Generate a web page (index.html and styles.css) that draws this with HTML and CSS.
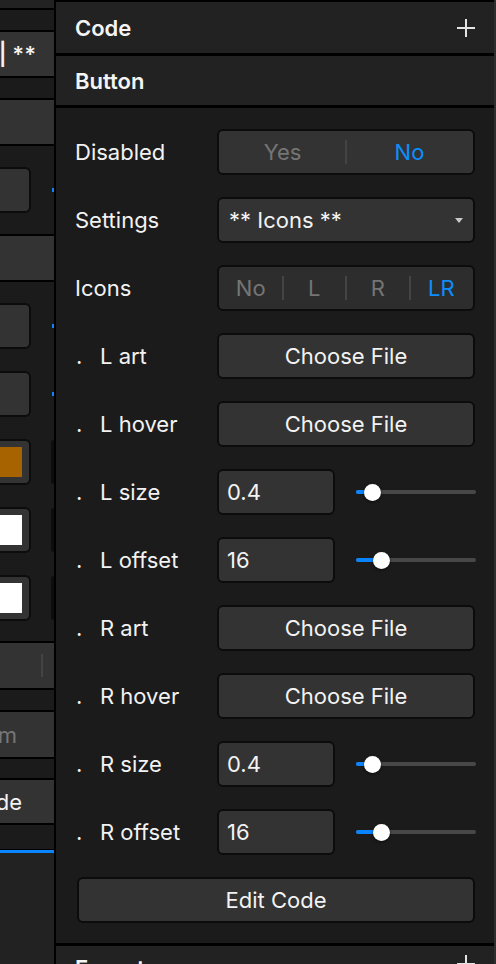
FILE: index.html
```html
<!DOCTYPE html>
<html>
<head>
<meta charset="utf-8">
<link rel="stylesheet" href="styles.css">
</head>
<body>
<div class="app">
  <div class="left">
    <div class="l-top"></div>
    <div class="l-dark h20"></div>
    <div class="l-band h44 l-text"><span>e| **</span></div>
    <div class="l-dark h20"></div>
    <div class="l-band h44"></div>
    <div class="l-dark l-list first">
      <div class="l-row"><div class="l-box"></div><div class="l-dot"></div></div>
    </div>
    <div class="l-band h44"></div>
    <div class="l-dark l-list second">
      <div class="l-row"><div class="l-box"></div><div class="l-dot"></div></div>
      <div class="l-row"><div class="l-box"></div><div class="l-dot"></div></div>
      <div class="l-row"><div class="l-box swatch"><div class="sw orange"></div></div><div class="l-edge"></div></div>
      <div class="l-row"><div class="l-box swatch"><div class="sw white"></div></div><div class="l-edge"></div></div>
      <div class="l-row"><div class="l-box swatch"><div class="sw white"></div></div><div class="l-edge"></div></div>
    </div>
    <div class="l-band h45 l-seg"><span class="l-div"></span></div>
    <div class="l-dark h20"></div>
    <div class="l-band h45 l-seg"><span class="l-muted">m</span><span class="l-div"></span></div>
    <div class="l-dark h19"></div>
    <div class="l-band h43 l-text"><span class="l-code">de</span></div>
    <div class="l-dark h24"></div>
    <div class="l-bottom"></div>
  </div>

  <div class="right">
    <div class="head head-code">
      <span>Code</span>
      <svg class="plus" width="18" height="18" viewBox="0 0 18 18"><path d="M9 0V18M0 9H18" stroke="#e4e4e4" stroke-width="2"/></svg>
    </div>
    <div class="head head-button"><span>Button</span></div>
    <div class="body">
      <div class="rows">
        <div class="label">Disabled</div>
        <div class="ctl seg seg2">
          <span class="opt">Yes</span><span class="opt on">No</span>
        </div>

        <div class="label">Settings</div>
        <div class="ctl select"><span>** Icons **</span><span class="caret"></span></div>

        <div class="label">Icons</div>
        <div class="ctl seg seg4 dim">
          <span class="opt">No</span><span class="opt">L</span><span class="opt">R</span><span class="opt on">LR</span>
        </div>

        <div class="label"><span class="dot">.</span>L art</div>
        <div class="ctl btn">Choose File</div>

        <div class="label"><span class="dot">.</span>L hover</div>
        <div class="ctl btn">Choose File</div>

        <div class="label"><span class="dot">.</span>L size</div>
        <div class="pair">
          <div class="ctl input">0.4</div>
          <div class="slider"><div class="track"><div class="fill" style="width:16px"></div><div class="thumb" style="left:16px"></div></div></div>
        </div>

        <div class="label"><span class="dot">.</span>L offset</div>
        <div class="pair">
          <div class="ctl input">16</div>
          <div class="slider"><div class="track"><div class="fill" style="width:25px"></div><div class="thumb" style="left:25px"></div></div></div>
        </div>

        <div class="label"><span class="dot">.</span>R art</div>
        <div class="ctl btn">Choose File</div>

        <div class="label"><span class="dot">.</span>R hover</div>
        <div class="ctl btn">Choose File</div>

        <div class="label"><span class="dot">.</span>R size</div>
        <div class="pair">
          <div class="ctl input">0.4</div>
          <div class="slider"><div class="track"><div class="fill" style="width:16px"></div><div class="thumb" style="left:16px"></div></div></div>
        </div>

        <div class="label"><span class="dot">.</span>R offset</div>
        <div class="pair">
          <div class="ctl input">16</div>
          <div class="slider"><div class="track"><div class="fill" style="width:25px"></div><div class="thumb" style="left:25px"></div></div></div>
        </div>

        <div class="ctl btn edit">Edit Code</div>
      </div>
    </div>
    <div class="head head-foot">
      <span>Export</span>
      <svg class="plus" width="18" height="18" viewBox="0 0 18 18"><path d="M9 0V18M0 9H18" stroke="#e4e4e4" stroke-width="2"/></svg>
    </div>
  </div>
</div>
</body>
</html>
```

FILE: styles.css
```css
* { box-sizing: border-box; }
html, body { margin: 0; padding: 0; }
body {
  background: #000;
  width: 496px;
  height: 964px;
  overflow: hidden;
  font-family: Inter, "Noto Sans", "Liberation Sans", sans-serif;
  color: #f2f2f2;
}
.app { display: flex; height: 964px; }

/* left strip */
.left {
  width: 54px;
  flex: none;
  margin-right: 2px;
  display: flex;
  flex-direction: column;
  gap: 2px;
  overflow: hidden;
}
.l-top { height: 8px; background: #222; flex: none; }
.l-dark { background: #1b1b1b; flex: none; }
.h19 { height: 19px; } .h20 { height: 20px; } .h24 { height: 24px; }
.h43 { height: 43px; } .h44 { height: 44px; } .h45 { height: 45px; }
.l-band { background: #333; flex: none; display: flex; align-items: center; }
.l-text { justify-content: flex-end; font-size: 22px; font-weight: 600; white-space: nowrap; }
.l-text span { padding-right: 18px; }
.l-text .l-code { padding-right: 32px; font-weight: 400; }
.l-seg { justify-content: flex-end; padding-right: 11px; font-size: 22px; }
.l-muted { color: #777; margin-right: 26px; }
.l-div { width: 2px; height: 23px; background: #444; }
.l-list { display: flex; flex-direction: column; gap: 22px; }
.l-list.first { height: 88px; padding-top: 21px; }
.l-list.second { height: 359px; padding-top: 21px; }
.l-row { display: flex; align-items: center; justify-content: space-between; height: 46px; }
.l-box {
  width: 60px; height: 46px; margin-left: -29px;
  background: #333; border: 2px solid #0c0c0c; border-radius: 6px;
  display: flex; align-items: center; justify-content: flex-end; padding-right: 7px;
}
.sw { width: 40px; height: 30px; }
.sw.orange { background: #a66300; }
.sw.white { background: #fff; }
.l-dot { width: 2px; height: 4px; background: #0a84ff; }
.l-edge { width: 3px; height: 44px; background: #0d0d0d; border-radius: 3px 0 0 3px; }
.l-bottom { flex: 1; background: #222; border-top: 3px solid #0a84ff; margin-top: -1px; }

/* right panel */
.right {
  flex: 1;
  display: flex;
  flex-direction: column;
  gap: 3px;
  padding-top: 2px;
  border-right: 2px solid #2e2e2e;
}
.head {
  background: #222;
  flex: none;
  display: flex;
  align-items: center;
  justify-content: space-between;
  padding: 0 19px 0 19px;
  font-size: 22px;
  font-weight: 600;
  color: #f4f4f4;
}
.head-code { height: 51px; }
.head-button { height: 49px; }
.head-foot { flex: 1; align-items: flex-start; padding-top: 9px; }
.plus { display: block; }
.body { background: #1b1b1b; height: 835px; flex: none; }
.rows {
  display: grid;
  grid-template-columns: 142px 258px;
  row-gap: 22px;
  padding: 21px 0 0 19px;
}
.label {
  font-size: 22px;
  display: flex;
  align-items: center;
  height: 46px;
  color: #f2f2f2;
}
.dot { display: inline-block; width: 25px; padding-left: 1px; }
.ctl {
  height: 46px;
  background: #333;
  border: 2px solid #0c0c0c;
  border-radius: 6px;
  font-size: 22px;
  color: #f2f2f2;
  display: flex;
  align-items: center;
}
.seg { display: grid; padding: 0; }
.seg2 { grid-template-columns: 1fr 1fr; }
.seg4 { grid-template-columns: repeat(4, 1fr); }
.seg.dim { background: #2d2d2d; }
.opt {
  color: #757575;
  text-align: center;
  position: relative;
  height: 100%;
  display: flex;
  align-items: center;
  justify-content: center;
}
.opt + .opt::before {
  content: "";
  position: absolute;
  left: -1px; top: 9px; bottom: 9px;
  width: 2px;
  background: #444;
}
.opt.on { color: #0a8fff; }
.select { justify-content: space-between; padding: 0 10px 0 10px; }
.caret {
  width: 0; height: 0;
  border-left: 4px solid transparent;
  border-right: 4px solid transparent;
  border-top: 5px solid #c8c8c8;
}
.btn { justify-content: center; }
.edit { grid-column: 1 / 3; margin-left: 2px; }
.pair { display: grid; grid-template-columns: 118px 1fr; column-gap: 21px; }
.input { padding-left: 8px; }
.slider { display: flex; align-items: center; margin-right: -1px; }
.track {
  position: relative;
  width: 100%;
  height: 4px;
  border-radius: 2px;
  background: #484848;
}
.fill { position: absolute; left: 0; top: 0; bottom: 0; background: #0a84ff; border-radius: 2px 0 0 2px; }
.thumb {
  position: absolute;
  top: 50%;
  width: 17px; height: 17px;
  margin: -8.5px 0 0 -8.5px;
  border-radius: 50%;
  background: #fff;
  box-shadow: 0 1px 3px rgba(0,0,0,0.6);
}
```
